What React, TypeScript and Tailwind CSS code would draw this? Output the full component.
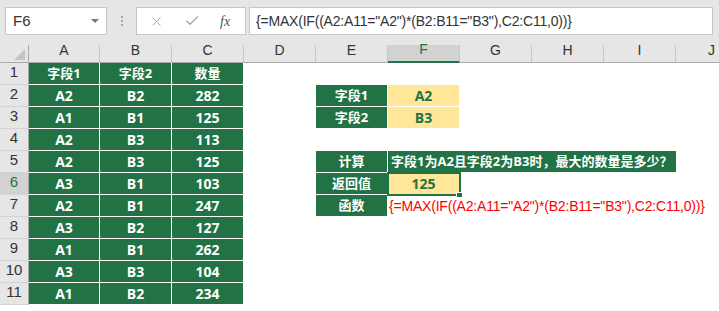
import { X, Check } from 'lucide-react';

const cols = ['A', 'B', 'C', 'D', 'E', 'F', 'G', 'H', 'I', 'J'];

const table = [
    ['字段1', '字段2', '数量'],
    ['A2', 'B2', '282'],
    ['A1', 'B1', '125'],
    ['A2', 'B3', '113'],
    ['A2', 'B3', '125'],
    ['A3', 'B1', '103'],
    ['A2', 'B1', '247'],
    ['A3', 'B2', '127'],
    ['A1', 'B1', '262'],
    ['A3', 'B3', '104'],
    ['A1', 'B2', '234'],
];

const formula = '{=MAX(IF((A2:A11="A2")*(B2:B11="B3"),C2:C11,0))}';

const green = 'bg-[#217346] text-white font-bold border-r border-b border-white flex items-center justify-center';
const yellow = 'bg-[#ffe699] text-[#217346] font-bold text-[14px] border-r border-b border-white flex items-center justify-center';

function RowHeader({ n }: { n: number }) {
    const active = n === 6;
    return (
        <div
            className={`flex items-end justify-center pb-[1px] border-r border-b border-r-[#ababab] border-b-[#d4d4d4] text-[15px] font-['Liberation_Sans',sans-serif] ${active ? 'bg-[#d2d2d2] text-[#217346]' : 'bg-[#e6e6e6] text-[#333]'}`}
        >
            {n}
        </div>
    );
}

function RightCells({ n }: { n: number }) {
    const blank = (k: number) => Array.from({ length: k }, (_, i) => <div key={`b${n}-${i}`} />);

    if (n === 2 || n === 3) {
        return (
            <>
                <div className={green}>{n === 2 ? '字段1' : '字段2'}</div>
                <div className={yellow}>{n === 2 ? 'A2' : 'B3'}</div>
                {blank(4)}
            </>
        );
    }
    if (n === 5) {
        return (
            <>
                <div className={green}>计算</div>
                <div className="col-span-4 bg-[#217346] text-white font-bold border-b border-white flex items-center pl-[3px] whitespace-nowrap overflow-hidden">
                    字段1为A2且字段2为B3时，最大的数量是多少？
                </div>
                {blank(1)}
            </>
        );
    }
    if (n === 6) {
        return (
            <>
                <div className={green}>返回值</div>
                <div className={`${yellow} relative`}>
                    125
                    {/* selection frame */}
                    <div className="absolute -left-[1px] -top-[1px] w-[74px] h-[24px] border-2 border-[#217346]" />
                    <div className="absolute left-[68px] top-[19px] w-[7px] h-[6px] bg-[#217346] border border-white" />
                </div>
                {blank(4)}
            </>
        );
    }
    if (n === 7) {
        return (
            <>
                <div className={green}>函数</div>
                <div className="col-span-5 flex items-center pl-[1px] whitespace-nowrap overflow-hidden text-[#ff0000] font-normal text-[14px] tracking-[-0.2px] font-['Liberation_Sans',sans-serif]">
                    {formula}
                </div>
            </>
        );
    }
    return <>{blank(6)}</>;
}

export default function App() {
    return (
        <div className="w-[719px] h-[311px] bg-white overflow-hidden">
            {/* Formula bar */}
            <div className="h-[45px] bg-[#e6e6e6] flex items-start pt-[7px]">
                <div className="ml-[5px] w-[102px] h-[28px] bg-white border border-[#c6c6c6] flex items-center justify-between pl-[7px] pr-[7px]">
                    <span className="text-[15px] text-[#333] font-['Liberation_Sans',sans-serif]">F6</span>
                    <span className="w-0 h-0 border-l-[4px] border-r-[4px] border-t-[4px] border-l-transparent border-r-transparent border-t-[#777]" />
                </div>
                <div className="ml-[14px] mt-[9px] flex flex-col gap-[2px]">
                    <span className="w-[2px] h-[2px] bg-[#a6a6a6]" />
                    <span className="w-[2px] h-[2px] bg-[#a6a6a6]" />
                    <span className="w-[2px] h-[2px] bg-[#a6a6a6]" />
                </div>
                <div className="ml-[13px] w-[110px] h-[28px] bg-white border border-[#c6c6c6] flex items-center">
                    <X size={15} strokeWidth={1.5} className="ml-[12px] text-[#a6a6a6]" />
                    <Check size={16} strokeWidth={2} className="ml-[20px] text-[#a6a6a6]" />
                    <span className="ml-[20px] text-[14px] italic text-[#555] font-['Liberation_Serif',serif]">fx</span>
                </div>
                <div className="ml-[3px] w-[464px] h-[28px] bg-white border border-[#c6c6c6] flex items-center pl-[6px] whitespace-nowrap text-[14px] tracking-[-0.2px] text-[#333] font-['Liberation_Sans',sans-serif]">
                    {formula}
                </div>
            </div>

            {/* Sheet */}
            <div className="grid grid-cols-[29px_71px_repeat(9,72px)] grid-rows-[18px_repeat(11,22px)] text-[13px] font-['Open_Sans','Noto_Sans_CJK_SC',sans-serif]">
                <div className="relative bg-[#e6e6e6] border-r border-b border-[#ababab]">
                    <svg className="absolute right-[3px] bottom-[2px]" width="11" height="11" viewBox="0 0 11 11">
                        <polygon points="11,0 11,11 0,11" fill="#c4c4c4" />
                    </svg>
                </div>
                {cols.map((c) => (
                    <div
                        key={c}
                        className={`flex items-end justify-center pb-[1px] border-r border-r-[#c6c6c6] text-[14px] font-['Liberation_Sans',sans-serif] ${c === 'F' ? 'bg-[#d2d2d2] text-[#217346] border-b-2 border-b-[#217346]' : 'bg-[#e6e6e6] text-[#333] border-b border-b-[#ababab]'}`}
                    >
                        {c}
                    </div>
                ))}

                {table.map((row, i) => {
                    const n = i + 1;
                    return (
                        <div key={n} className="contents">
                            <RowHeader n={n} />
                            {row.map((v, j) => (
                                <div key={j} className={`${green} ${n > 1 ? 'text-[14px]' : ''}`}>{v}</div>
                            ))}
                            <div />
                            <RightCells n={n} />
                        </div>
                    );
                })}
            </div>
        </div>
    );
}
